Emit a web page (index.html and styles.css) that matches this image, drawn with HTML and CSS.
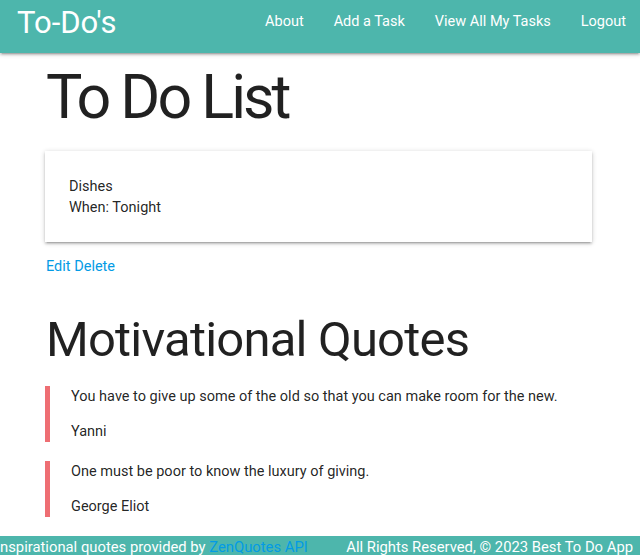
FILE: index.html
```html
<!DOCTYPE html>
<html lang="en">
<head>
<meta charset="utf-8">
<title>To-Do's</title>
<link rel="stylesheet" href="styles.css">
</head>
<body>
<nav class="nav">
  <a class="brand" href="#">To-Do's</a>
  <ul class="nav-links">
    <li><a href="#">About</a></li>
    <li><a href="#">Add a Task</a></li>
    <li><a href="#">View All My Tasks</a></li>
    <li><a href="#">Logout</a></li>
  </ul>
</nav>
<main class="container">
  <h1 class="title">To Do List</h1>
  <div class="card">
    <div class="card-line">Dishes</div>
    <div class="card-line">When: Tonight</div>
  </div>
  <div class="actions"><a href="#">Edit</a> <a href="#">Delete</a></div>
  <h2 class="subtitle">Motivational Quotes</h2>
  <blockquote class="quote">
    <p>You have to give up some of the old so that you can make room for the new.</p>
    <p>Yanni</p>
  </blockquote>
  <blockquote class="quote">
    <p>One must be poor to know the luxury of giving.</p>
    <p>George Eliot</p>
  </blockquote>
</main>
<footer class="footer">
  <span class="credit">Inspirational quotes provided by <a href="#">ZenQuotes API</a></span>
  <span class="rights">All Rights Reserved, © 2023 Best To Do App</span>
</footer>
</body>
</html>
```
FILE: styles.css
```css
* { box-sizing: border-box; }
html, body { margin: 0; padding: 0; }
body {
  font-family: Roboto, "Noto Sans", sans-serif;
  font-size: 14.5px;
  line-height: 21px;
  color: rgba(0,0,0,0.87);
  background: #fff;
  overflow: hidden;
}
a { text-decoration: none; color: #039be5; }

.nav {
  height: 53px;
  background: #4db6ac;
  display: flex;
  align-items: flex-start;
  justify-content: space-between;
  box-shadow: 0 2px 2px 0 rgba(0,0,0,0.14), 0 3px 1px -2px rgba(0,0,0,0.12), 0 1px 5px 0 rgba(0,0,0,0.2);
  position: relative;
  z-index: 1;
}
.brand {
  color: #fff;
  font-size: 31px;
  line-height: 46px;
  padding-left: 17px;
}
.nav-links {
  list-style: none;
  margin: 0;
  padding: 0;
  display: flex;
}
.nav-links a {
  display: block;
  color: #fff;
  font-size: 14.5px;
  line-height: 44px;
  padding: 0 15px;
}
.nav-links li:last-child a { padding-right: 14px; }

.container { margin: 0 48px 0 45px; }
.title {
  font-weight: 400;
  font-size: 61px;
  line-height: 66px;
  letter-spacing: -3px;
  margin: 11px 0 21px 1px;
}
.card {
  background: #fff;
  padding: 25px 24px 24px;
  line-height: 21px;
  box-shadow: 0 2px 2px 0 rgba(0,0,0,0.14), 0 3px 1px -2px rgba(0,0,0,0.12), 0 1px 5px 0 rgba(0,0,0,0.2);
  margin-bottom: 14px;
}
.actions { margin-left: 1px; line-height: 21px; }
.subtitle {
  font-weight: 400;
  font-size: 49px;
  line-height: 53px;
  letter-spacing: -0.8px;
  margin: 36px 0 20px 1px;
}
.quote {
  margin: 0 0 19px 0;
  border-left: 5px solid #ee6e73;
  padding-left: 21px;
}
.quote p { margin: 0; }
.quote p + p { margin-top: 14px; }

.footer {
  background: #4db6ac;
  color: #fff;
  display: flex;
  justify-content: space-between;
  padding: 2px 7px 20px 0;
  font-size: 14.8px;
  line-height: 18px;
  white-space: nowrap;
}
.credit { margin-left: -4px; }
```
